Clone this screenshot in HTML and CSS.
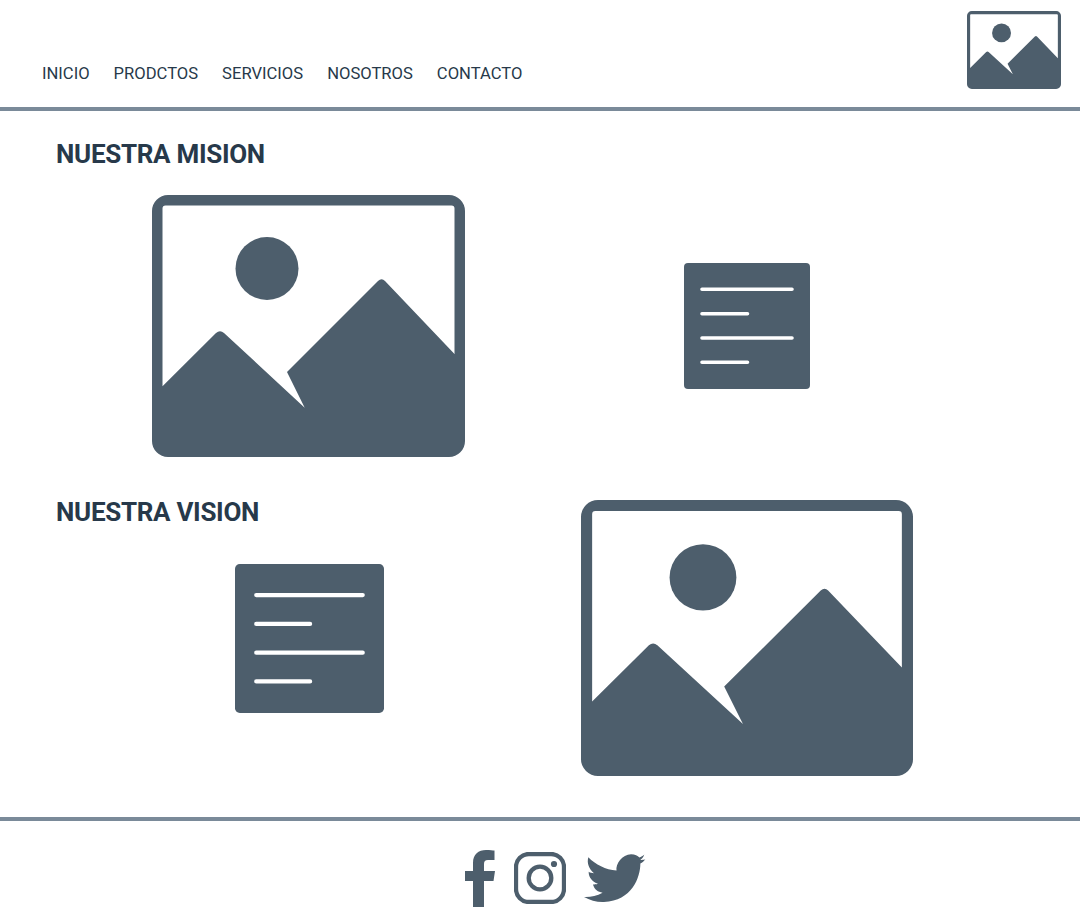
FILE: index.html
```html
<!DOCTYPE html>
<html lang="en">
<head>
    <meta charset="UTF-8">
    <meta name="viewport" content="width=device-width, initial-scale=1.0">
    <title>Nosotros</title>
    <link rel="stylesheet" href="styles.css">
</head>
<body>
    <svg class="sprites" width="0" height="0">
        <symbol id="pic" viewBox="0 0 313 262" preserveAspectRatio="none">
            <path fill-rule="evenodd" d="M16,0 H297 A16,16 0 0 1 313,16 V246 A16,16 0 0 1 297,262 H16 A16,16 0 0 1 0,246 V16 A16,16 0 0 1 16,0 Z M13.5,10.5 A3,3 0 0 0 10.5,13.5 V191.3 L64,138 Q68,134.5 72,138 L152.7,212.7 L135,177 L226,86 Q229.7,82.5 233,86 L302.5,159 V13.5 A3,3 0 0 0 299.5,10.5 Z"/>
            <circle cx="115" cy="73.5" r="31.5"/>
        </symbol>
        <symbol id="doc" viewBox="0 0 126 126">
            <rect width="126" height="126" rx="4"/>
            <path class="doc-lines" d="M18,26.3 H108 M18,50.7 H63.5 M18,75 H108 M18,99.3 H63.5"/>
        </symbol>
    </svg>

    <header class="top">
        <nav class="menu">
            <a href="#">INICIO</a>
            <a href="#">PRODCTOS</a>
            <a href="#">SERVICIOS</a>
            <a href="#">NOSOTROS</a>
            <a href="#">CONTACTO</a>
        </nav>
        <svg class="logo"><use href="#pic"/></svg>
    </header>

    <main>
        <h2 class="title-mision">NUESTRA MISION</h2>
        <section class="row row-mision">
            <svg class="pic-mision"><use href="#pic"/></svg>
            <svg class="doc-mision"><use href="#doc"/></svg>
        </section>
        <section class="row row-vision">
            <div class="vision-left">
                <h2>NUESTRA VISION</h2>
                <svg class="doc-vision"><use href="#doc"/></svg>
            </div>
            <svg class="pic-vision"><use href="#pic"/></svg>
        </section>
    </main>

    <footer class="bottom">
        <svg class="fb" viewBox="0 0 30 57"><path d="M8,57 V31 H0 V21 H8 V13 C8,4 13.5,0 21,0 C25,0 28,.3 29.5,.6 V10 H23 C20,10 19,11.5 19,14 V21 H30 L28.5,31 H19 V57 Z"/></svg>
        <svg class="ig" viewBox="0 0 52 52"><rect class="ig-line" x="2" y="2" width="48" height="48" rx="13"/><circle class="ig-line" cx="26" cy="26" r="11.3"/><circle cx="40" cy="12" r="3.1"/></svg>
        <svg class="tw" viewBox="430 125 190 155"><path d="M443,140 C465,162 495,178 528,180 C525,160 545,132 572,131 C584,131 592,136 597,141 C602,140 608,136 612,132 C610,138 606,144 600,148 C605,148 610,148 615,146 C611,151 606,156 600,159 C600,200 575,272 490,275 C470,276 448,270 430,260 C448,261 468,257 486,247 C472,244 462,238 457,222 C462,222 466,222 472,220 C456,215 444,202 444,184 C449,187 454,188 460,188 C445,175 438,158 443,140 Z"/></svg>
    </footer>
</body>
</html>
```
FILE: styles.css
```css
body {
    margin: 0;
    font-family: Roboto, "Liberation Sans", sans-serif;
    color: #27394a;
    background: #fff;
}
svg {
    display: block;
    fill: #4d5e6c;
}
.sprites {
    position: absolute;
}
.doc-lines {
    fill: none;
    stroke: #fff;
    stroke-width: 3.6;
    stroke-linecap: round;
}

.top {
    display: flex;
    justify-content: space-between;
    align-items: flex-start;
    height: 107px;
    padding: 11px 19px 0 42px;
    box-sizing: border-box;
}
.menu {
    display: flex;
    gap: 24px;
    margin-top: 53px;
}
.menu a {
    color: #27394a;
    text-decoration: none;
    font-size: 16.6px;
    line-height: 20px;
}
.logo {
    width: 94px;
    height: 78px;
}

main {
    border-top: 4px solid #7a8a99;
    border-bottom: 4px solid #7a8a99;
    height: 706px;
    padding-left: 56px;
}
h2 {
    margin: 0;
    font-size: 26px;
    line-height: 30px;
    font-weight: 700;
    letter-spacing: -0.3px;
}
.title-mision {
    padding-top: 28px;
}
.row {
    display: grid;
    align-items: center;
    justify-items: center;
}
.row-mision {
    grid-template-columns: 505px 372px;
    margin-top: 26px;
}
.row-vision {
    grid-template-columns: 506px 370px;
    margin-top: 43px;
}
.pic-mision {
    width: 313px;
    height: 262px;
}
.doc-mision {
    width: 126px;
    height: 126px;
}
.vision-left {
    justify-self: stretch;
    align-self: start;
    margin-top: -3px;
}
.doc-vision {
    width: 149px;
    height: 149px;
    margin: 36.5px auto 0;
}
.pic-vision {
    width: 332px;
    height: 276px;
}

.bottom {
    display: flex;
    justify-content: center;
    align-items: flex-start;
    padding: 29px 0 0 32px;
}
.fb {
    width: 30px;
    height: 57px;
}
.ig {
    width: 52px;
    height: 52px;
    margin: 2px 0 0 19px;
}
.ig-line {
    fill: none;
    stroke: #4d5e6c;
    stroke-width: 4.3;
}
.tw {
    width: 63px;
    height: 52px;
    margin: 2px 0 0 18px;
}
```
